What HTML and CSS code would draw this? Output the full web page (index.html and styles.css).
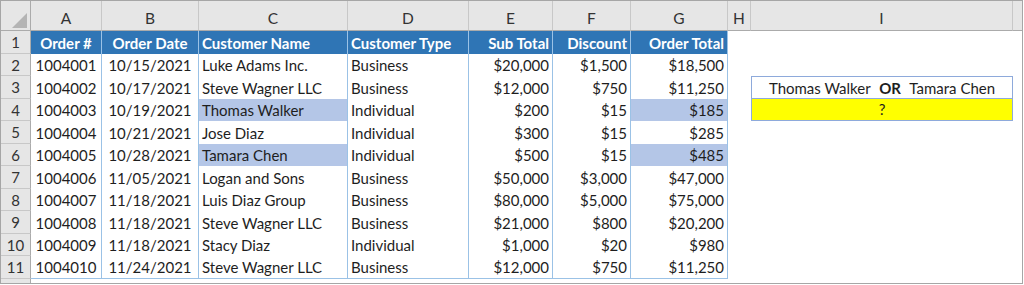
FILE: index.html
```html
<!DOCTYPE html>
<html>
<head>
<meta charset="utf-8">
<link rel="stylesheet" href="styles.css">
</head>
<body>
<div class="sheet">
  <div class="corner"></div>
  <div class="colh">A</div><div class="colh">B</div><div class="colh">C</div><div class="colh">D</div><div class="colh">E</div><div class="colh">F</div><div class="colh">G</div><div class="colh">H</div><div class="colh">I</div><div class="colh last"></div>

  <div class="rowh">1</div>
  <div class="th c">Order #</div><div class="th c">Order Date</div><div class="th">Customer Name</div><div class="th">Customer Type</div><div class="th r">Sub Total</div><div class="th r">Discount</div><div class="th r">Order Total</div>
  <div class="blank"></div><div class="blank"></div><div class="blank"></div>

  <div class="rowh">2</div>
  <div class="td c">1004001</div><div class="td c">10/15/2021</div><div class="td">Luke Adams Inc.</div><div class="td">Business</div><div class="td r">$20,000</div><div class="td r">$1,500</div><div class="td r">$18,500</div>
  <div class="blank"></div><div class="blank"></div><div class="blank"></div>

  <div class="rowh">3</div>
  <div class="td c">1004002</div><div class="td c">10/17/2021</div><div class="td">Steve Wagner LLC</div><div class="td">Business</div><div class="td r">$12,000</div><div class="td r">$750</div><div class="td r">$11,250</div>
  <div class="blank"></div><div class="crit">Thomas Walker <b>OR</b> Tamara Chen</div><div class="blank"></div>

  <div class="rowh">4</div>
  <div class="td c">1004003</div><div class="td c">10/19/2021</div><div class="td hl">Thomas Walker</div><div class="td">Individual</div><div class="td r">$200</div><div class="td r">$15</div><div class="td r hl">$185</div>
  <div class="blank"></div><div class="res">?</div><div class="blank"></div>

  <div class="rowh">5</div>
  <div class="td c">1004004</div><div class="td c">10/21/2021</div><div class="td">Jose Diaz</div><div class="td">Individual</div><div class="td r">$300</div><div class="td r">$15</div><div class="td r">$285</div>
  <div class="blank"></div><div class="blank"></div><div class="blank"></div>

  <div class="rowh">6</div>
  <div class="td c">1004005</div><div class="td c">10/28/2021</div><div class="td hl">Tamara Chen</div><div class="td">Individual</div><div class="td r">$500</div><div class="td r">$15</div><div class="td r hl">$485</div>
  <div class="blank"></div><div class="blank"></div><div class="blank"></div>

  <div class="rowh">7</div>
  <div class="td c">1004006</div><div class="td c">11/05/2021</div><div class="td">Logan and Sons</div><div class="td">Business</div><div class="td r">$50,000</div><div class="td r">$3,000</div><div class="td r">$47,000</div>
  <div class="blank"></div><div class="blank"></div><div class="blank"></div>

  <div class="rowh">8</div>
  <div class="td c">1004007</div><div class="td c">11/18/2021</div><div class="td">Luis Diaz Group</div><div class="td">Business</div><div class="td r">$80,000</div><div class="td r">$5,000</div><div class="td r">$75,000</div>
  <div class="blank"></div><div class="blank"></div><div class="blank"></div>

  <div class="rowh">9</div>
  <div class="td c">1004008</div><div class="td c">11/18/2021</div><div class="td">Steve Wagner LLC</div><div class="td">Business</div><div class="td r">$21,000</div><div class="td r">$800</div><div class="td r">$20,200</div>
  <div class="blank"></div><div class="blank"></div><div class="blank"></div>

  <div class="rowh">10</div>
  <div class="td c">1004009</div><div class="td c">11/18/2021</div><div class="td">Stacy Diaz</div><div class="td">Individual</div><div class="td r">$1,000</div><div class="td r">$20</div><div class="td r">$980</div>
  <div class="blank"></div><div class="blank"></div><div class="blank"></div>

  <div class="rowh">11</div>
  <div class="td c end">1004010</div><div class="td c end">11/24/2021</div><div class="td end">Steve Wagner LLC</div><div class="td end">Business</div><div class="td r end">$12,000</div><div class="td r end">$750</div><div class="td r end">$11,250</div>
  <div class="blank"></div><div class="blank"></div><div class="blank"></div>

  <div class="rowh tail"></div>
</div>
</body>
</html>
```

FILE: styles.css
```css
html, body {
  margin: 0;
  padding: 0;
  background: #ffffff;
}

.sheet {
  display: grid;
  grid-template-columns: 30px 71px 97px 149px 121px 84px 78px 97px 23px 262px 9px;
  grid-template-rows: 30px repeat(11, 22.5px) 1fr;
  width: 1021px;
  height: 282px;
  border: 1px solid #a6a6a6;
  font-family: Lato, "Liberation Sans", sans-serif;
  font-size: 15px;
  color: #1e1e1e;
  background: #ffffff;
}

.sheet > div {
  box-sizing: border-box;
  display: flex;
  align-items: center;
  white-space: pre;
  overflow: hidden;
  min-width: 0;
}

.corner {
  position: relative;
  background: #e6e6e6;
  border-right: 1px solid #ababab;
  border-bottom: 1px solid #ababab;
}

.corner::after {
  content: "";
  position: absolute;
  right: 3px;
  bottom: 2px;
  width: 15px;
  height: 15px;
  background: #b4b4b4;
  clip-path: polygon(100% 0, 100% 100%, 0 100%);
}

.colh {
  background: #e6e6e6;
  border-right: 1px solid #c8c8c8;
  border-bottom: 1px solid #ababab;
  justify-content: center;
  align-items: flex-end !important;
  padding-bottom: 3px;
  color: #333333;
  font-size: 15.5px;
}

.colh.last {
  border-right: none;
}

.rowh {
  background: #e6e6e6;
  border-right: 1px solid #ababab;
  border-bottom: 1px solid #c8c8c8;
  justify-content: center;
  color: #333333;
  padding-top: 1px;
}

.rowh.tail {
  border-bottom: none;
}

.th {
  background: #2f75b5;
  color: #ffffff;
  font-weight: 700;
  border-right: 1px solid #9bc2e6;
  padding: 1px 3px 0 3px;
}

.td {
  border-right: 1px solid #9bc2e6;
  padding: 1px 3px 0 3px;
}

.c {
  justify-content: center;
}

.r {
  justify-content: flex-end;
}

.hl {
  background: #b4c6e7;
}

.end {
  border-bottom: 1px solid #9bc2e6;
}

.crit {
  border: 1px solid #8eaadb;
  justify-content: center;
  padding-top: 1px;
}

.crit b {
  font-weight: 700;
  margin: 0 5px;
}

.res {
  background: #ffff00;
  border: 1px solid #8eaadb;
  border-top: none;
  justify-content: center;
}
```
